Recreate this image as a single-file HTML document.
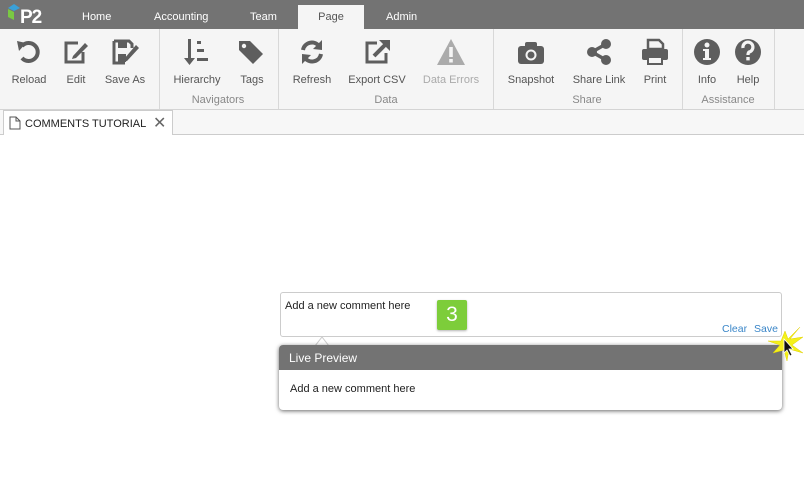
<!DOCTYPE html>
<html><head><meta charset="utf-8"><style>
*{box-sizing:border-box;margin:0;padding:0}
body{width:804px;height:489px;background:#fff;font-family:"Liberation Sans",sans-serif;position:relative;overflow:hidden;color:#333}
.top{position:absolute;left:0;top:0;width:804px;height:29px;background:#737373}
.tab{position:absolute;top:11px;font-size:11px;color:#fff}
.act{position:absolute;left:298px;top:5px;width:66px;height:24px;background:#f5f5f5;color:#555;font-size:11px;text-align:center;padding-top:6px}
.rib{position:absolute;left:0;top:29px;width:804px;height:81px;background:#f5f5f5;border-bottom:1px solid #d4d4d4}
.sep{position:absolute;top:29px;width:1px;height:80px;background:#d8d8d8}
.lbl{position:absolute;top:74px;font-size:11px;color:#555;white-space:nowrap;transform:translateX(-50%)}
.grp{position:absolute;top:94px;font-size:11px;color:#888;transform:translateX(-50%);white-space:nowrap}
.ic{position:absolute;top:37px;width:30px;height:30px;transform:translateX(-50%)}
.ts{position:absolute;left:0;top:110px;width:804px;height:25px;background:#f7f7f7;border-bottom:1px solid #ccc}
.dt{position:absolute;left:3px;top:110px;width:170px;height:25px;background:#fff;border:1px solid #ccc;border-bottom:none;font-size:11px;color:#222}
</style></head><body>
<div class="top"></div>
<svg style="position:absolute;left:6px;top:3px" width="44" height="24"><polygon points="2,5 8,1 14,5 8,8" fill="#3aa0d8"/><polygon points="2,6 8,9 8,17 2,14" fill="#7ac943"/><text x="14" y="20" font-family="Liberation Sans" font-weight="bold" font-size="19" fill="#fff" letter-spacing="-1">P2</text></svg>
<div class="tab" style="left:82px">Home</div>
<div class="tab" style="left:154px">Accounting</div>
<div class="tab" style="left:250px">Team</div>
<div class="act">Page</div>
<div class="tab" style="left:386px">Admin</div>
<div class="rib"></div>
<div class="sep" style="left:159px"></div><div class="sep" style="left:278px"></div><div class="sep" style="left:493px"></div><div class="sep" style="left:682px"></div><div class="sep" style="left:774px"></div>

<svg class="ic" style="left:29px" viewBox="0 0 30 30"><path d="M8 9 A9 9 0 1 1 8 21" fill="none" stroke="#5e5e5e" stroke-width="4"/><polygon points="3,4 12,6 5,14" fill="#5e5e5e"/></svg>
<svg class="ic" style="left:76px" viewBox="0 0 30 30"><path d="M17 6 H5 V25 H22 V15" fill="none" stroke="#5e5e5e" stroke-width="3"/><path d="M12 19 L24 6 L27 9 L15 21 L11 22Z" fill="#5e5e5e"/></svg>
<svg class="ic" style="left:125px" viewBox="0 0 30 30"><path d="M4 4 H19 L22 7 V11 M15 26 H4 V4" fill="none" stroke="#5e5e5e" stroke-width="3"/><rect x="8" y="5" width="9" height="6" fill="#5e5e5e"/><rect x="8" y="17" width="8" height="8" fill="#5e5e5e"/><path d="M14 22 L26 8 L29 11 L17 24 L13 25Z" fill="#5e5e5e"/></svg>
<svg class="ic" style="left:197px" viewBox="0 0 30 30"><rect x="6" y="2" width="3" height="22" fill="#5e5e5e"/><polygon points="2,21 13,21 7.5,28" fill="#5e5e5e"/><rect x="15" y="4" width="4" height="3" fill="#5e5e5e"/><rect x="15" y="12" width="7" height="3" fill="#5e5e5e"/><rect x="15" y="21" width="11" height="3" fill="#5e5e5e"/></svg>
<svg class="ic" style="left:251px" viewBox="0 0 30 30"><path d="M3 4 H14 L27 17 L17 27 L3 13Z" fill="#5e5e5e"/><circle cx="8" cy="9" r="2.2" fill="#f5f5f5"/></svg>
<svg class="ic" style="left:312px" viewBox="0 0 30 30"><path d="M6 13 A9 9 0 0 1 22 9" fill="none" stroke="#5e5e5e" stroke-width="4"/><polygon points="25,3 25,13 16,12" fill="#5e5e5e"/><path d="M24 17 A9 9 0 0 1 8 21" fill="none" stroke="#5e5e5e" stroke-width="4"/><polygon points="5,27 5,17 14,18" fill="#5e5e5e"/></svg>
<svg class="ic" style="left:377px" viewBox="0 0 30 30"><path d="M15 6 H5 V25 H24 V16" fill="none" stroke="#5e5e5e" stroke-width="3"/><path d="M12 19 L24 7" stroke="#5e5e5e" stroke-width="4"/><polygon points="17,3 28,3 28,14" fill="#5e5e5e"/></svg>
<svg class="ic" style="left:451px" viewBox="0 0 30 30"><path d="M15 2 L29 28 H1Z" fill="#ababab"/><rect x="13.2" y="10" width="3.6" height="10" fill="#f5f5f5"/><rect x="13.2" y="22" width="3.6" height="3.5" fill="#f5f5f5"/></svg>
<svg class="ic" style="left:531px" viewBox="0 0 30 30"><rect x="2" y="9" width="26" height="18" rx="3" fill="#5e5e5e"/><rect x="9" y="5" width="12" height="6" rx="2" fill="#5e5e5e"/><circle cx="15" cy="18" r="5.5" fill="#f5f5f5"/><circle cx="15" cy="18" r="3.5" fill="#5e5e5e"/></svg>
<svg class="ic" style="left:599px" viewBox="0 0 30 30"><path d="M22 7 L8 15 L22 23" stroke="#5e5e5e" stroke-width="3.5" fill="none"/><circle cx="22" cy="7" r="5" fill="#5e5e5e"/><circle cx="8" cy="15" r="5" fill="#5e5e5e"/><circle cx="22" cy="23" r="5" fill="#5e5e5e"/></svg>
<svg class="ic" style="left:655px" viewBox="0 0 30 30"><path d="M8 3 H19 L23 7 V12 H8Z" fill="none" stroke="#5e5e5e" stroke-width="2.5"/><rect x="2" y="12" width="26" height="11" rx="2" fill="#5e5e5e"/><rect x="8" y="20" width="14" height="7" fill="#f5f5f5" stroke="#5e5e5e" stroke-width="2"/></svg>
<svg class="ic" style="left:707px" viewBox="0 0 30 30"><circle cx="15" cy="15" r="13" fill="#5e5e5e"/><circle cx="15" cy="8" r="2.5" fill="#f5f5f5"/><path d="M11 12 H17 V21 H19 V23 H11 V21 H13 V14 H11Z" fill="#f5f5f5"/></svg>
<svg class="ic" style="left:748px" viewBox="0 0 30 30"><circle cx="15" cy="15" r="13" fill="#5e5e5e"/><path d="M10 11 A5 5 0 1 1 16 15 Q15 16 15 18" fill="none" stroke="#f5f5f5" stroke-width="3.2"/><rect x="13.3" y="20" width="3.4" height="3.4" fill="#f5f5f5"/></svg>

<div class="lbl" style="left:29px">Reload</div><div class="lbl" style="left:76px">Edit</div><div class="lbl" style="left:125px">Save As</div>
<div class="lbl" style="left:197px">Hierarchy</div><div class="lbl" style="left:252px">Tags</div>
<div class="lbl" style="left:312px">Refresh</div><div class="lbl" style="left:377px">Export CSV</div><div class="lbl" style="left:451px;color:#aaa">Data Errors</div>
<div class="lbl" style="left:531px">Snapshot</div><div class="lbl" style="left:599px">Share Link</div><div class="lbl" style="left:655px">Print</div>
<div class="lbl" style="left:707px">Info</div><div class="lbl" style="left:748px">Help</div>
<div class="grp" style="left:218px">Navigators</div><div class="grp" style="left:386px">Data</div><div class="grp" style="left:587px">Share</div><div class="grp" style="left:728px">Assistance</div>

<div class="ts"></div>
<div class="dt"><div style="position:absolute;left:21px;top:7px;width:124px;overflow:hidden;white-space:nowrap">COMMENTS TUTORIAL <span style="color:#aaa">Q</span></div><span style="position:absolute;left:149px;top:2px;font-size:16px;color:#666">✕</span></div>
<svg style="position:absolute;left:9px;top:116px" width="12" height="14"><path d="M1 1 H7 L11 5 V13 H1Z M7 1 V5 H11" fill="#fff" stroke="#555" stroke-width="1"/></svg>

<div style="position:absolute;left:280px;top:292px;width:502px;height:45px;border:1px solid #ccc;border-radius:3px;background:#fff;font-size:11px;padding:7px 4px;color:#222">Add a new comment here</div>
<div style="position:absolute;left:437px;top:300px;width:30px;height:30px;background:#7dcd3a;border-radius:2px;color:#fff;font-size:21px;text-align:center;line-height:30px;box-shadow:0 1px 2px rgba(0,0,0,.3)">3</div>
<div style="position:absolute;left:722px;top:323px;font-size:10.5px;color:#3a86c8">Clear</div>
<div style="position:absolute;left:754px;top:323px;font-size:10.5px;color:#3a86c8">Save</div>
<svg style="position:absolute;left:315px;top:336px" width="16" height="10"><path d="M0 10 L7 1 L14 10" fill="#fff" stroke="#ccc"/></svg>
<div style="position:absolute;left:279px;top:345px;width:503px;height:65px;background:#fff;border-radius:4px;box-shadow:0 1px 4px rgba(0,0,0,.6);overflow:hidden">
<div style="height:25px;background:#737373;color:#fff;font-size:12px;padding:6px 10px">Live Preview</div>
<div style="font-size:11px;padding:13px 11px;color:#222">Add a new comment here</div></div>
<svg style="position:absolute;left:765px;top:327px" width="40" height="34"><polygon points="35,0 25,12 38,10 27,18 38,26 24,22 22,34 19,23 8,26 15,18 3,14 16,14 20,4 23,12" fill="#f4f11a" stroke="#e0d000" stroke-width=".5"/><path d="M19 12 L19 26 L22 23 L25 29 L27 28 L24 22 L28 22Z" fill="#111" stroke="#fff" stroke-width=".8"/></svg>
</body></html>
